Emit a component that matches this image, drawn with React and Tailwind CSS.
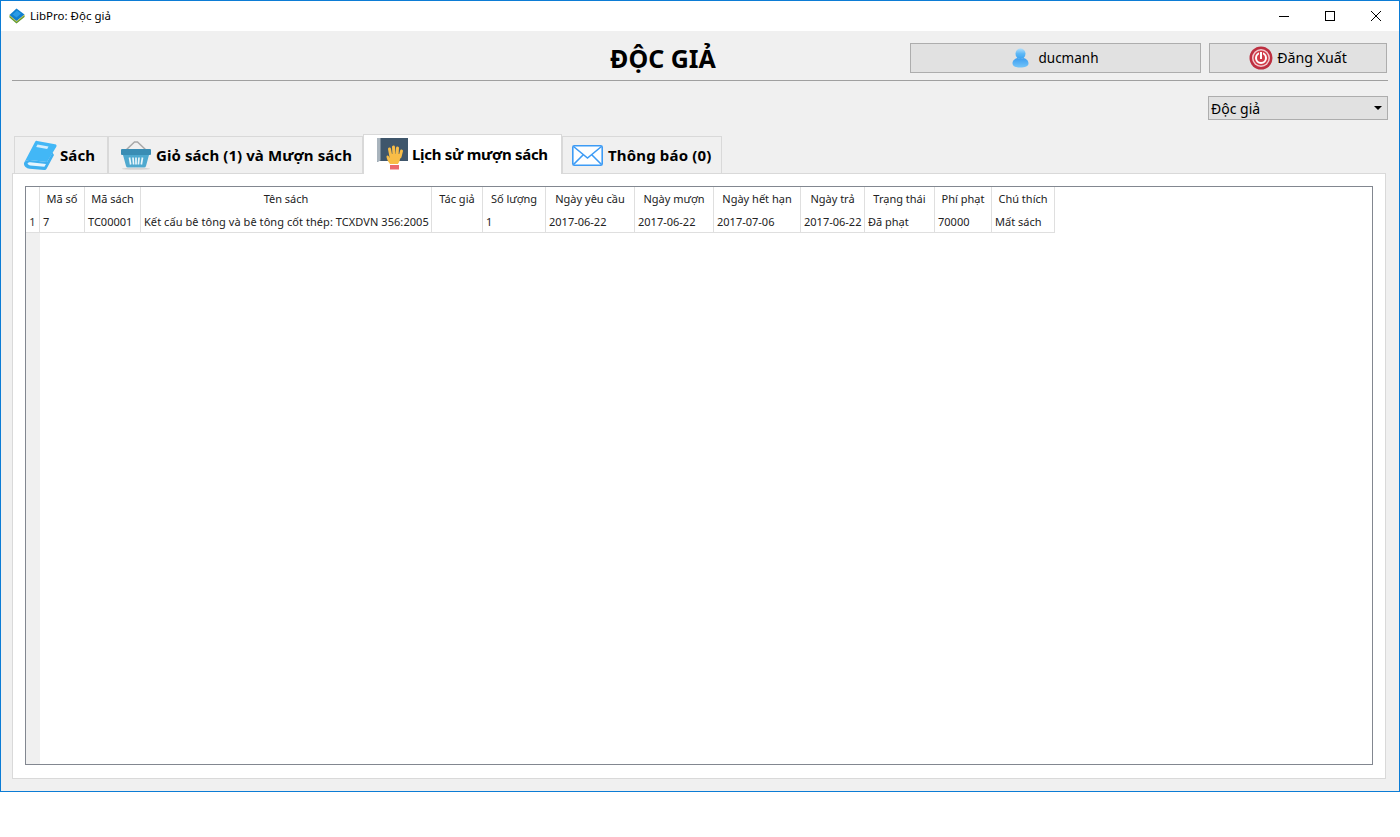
import React from "react";

const columns = [
  { title: "Mã số", value: "7", width: 45 },
  { title: "Mã sách", value: "TC00001", width: 56 },
  { title: "Tên sách", value: "Kết cấu bê tông và bê tông cốt thép: TCXDVN 356:2005", width: 291 },
  { title: "Tác giả", value: "", width: 51 },
  { title: "Số lượng", value: "1", width: 63 },
  { title: "Ngày yêu cầu", value: "2017-06-22", width: 89 },
  { title: "Ngày mượn", value: "2017-06-22", width: 79 },
  { title: "Ngày hết hạn", value: "2017-07-06", width: 87 },
  { title: "Ngày trả", value: "2017-06-22", width: 64 },
  { title: "Trạng thái", value: "Đã phạt", width: 70 },
  { title: "Phí phạt", value: "70000", width: 57 },
  { title: "Chú thích", value: "Mất sách", width: 63 },
];

function AppIcon() {
  return (
    <svg width="16" height="16" viewBox="0 0 16 16">
      <path d="M0.500 8.500l7 6.500 8-6.500v-2l-8 6.500-7-6.500z" fill="#d6c23c" />
      <path d="M0.500 9.500l7 6 8-6.500v-1.500l-8 6.500-7-6z" fill="#5c9a3a" />
      <path d="M0.500 7l7-6.500 8 6-8 6.500z" fill="#0f7fd0" />
      <path d="M3.500 6.500l4.500-4 4 3-4.500 4z" fill="#2a9be6" />
    </svg>
  );
}

function BookIcon() {
  return (
    <svg width="34" height="32" viewBox="0 0 34 32">
      <path d="M1 24L12 3c.500-1 1.200-1.300 2.200-1.100l17.800 3.300c1.500.300 2 1.400 1.300 2.600L24 23 7 21c-2.500-.300-5.500 1-6 3z" fill="#42b7f6" />
      <path d="M1 24c-.500 3 2.500 5.500 5.500 5.800L21 31c1.200.100 2-.300 2.600-1.300L31 16l-1.500-2.500L24 23 7 21c-2.500-.300-5.500 1-6 3z" fill="#3fb0f0" />
      <path d="M4.500 24.300c.500-.800 1.900-1.200 3-1.100l15.500 1.800-1.600 2.800-14-1.300c-1.200-.100-2.500-.900-2.900-2.200z" fill="#e6f5fe" />
      <path d="M14.500 5.500l11 2-1.300 2.500-11-2z" fill="#d3eefd" />
    </svg>
  );
}

function BasketIcon() {
  return (
    <svg width="32" height="30" viewBox="0 0 32 30">
      <path d="M6 10L14.500 2h3L26 10" fill="none" stroke="#a8a8a8" strokeWidth="1.500" />
      <path d="M2 9h28a1 1 0 0 1 1 1v4a1 1 0 0 1-1 1H2a1 1 0 0 1-1-1v-4a1 1 0 0 1 1-1z" fill="#3a8db4" />
      <path d="M3 15h26l-3 11a2 2 0 0 1-2 1.500H8A2 2 0 0 1 6 26z" fill="#4fa9cf" />
      <path d="M9.500 17.500l1.200 7M13 17.500l.600 7M16 17.500v7M19 17.500l-.600 7M22.500 17.500l-1.200 7" stroke="#e9f6fb" strokeWidth="1.700" />
      <ellipse cx="16" cy="28.700" rx="14" ry="1" fill="#d2d2d2" />
    </svg>
  );
}

function HandBookIcon() {
  return (
    <svg width="33" height="36" viewBox="0 0 33 36">
      <path d="M1 1h31v23H5c-2 0-4 .500-4 1z" fill="#3f566b" />
      <path d="M1 1h3.500v22.500L1 25z" fill="#a9b4bd" />
      <path d="M15 20l-1.500-8M18 19l-.500-9M21 19l.500-8M24 20l1.500-6" stroke="#f8bd47" strokeWidth="3" strokeLinecap="round" />
      <path d="M14 27c-1.500-2-3-4-3.500-7-.200-1.500 1.200-2 2-1l1.500 2V17h11l-1 5c-.300 2-1 3.500-2 5z" fill="#f8bd47" />
      <path d="M14 28h9v4.500h-9z" fill="#ec6a6e" />
    </svg>
  );
}

function MailIcon() {
  return (
    <svg width="31" height="21" viewBox="0 0 31 21" fill="none" stroke="#3d9bf5" strokeWidth="1.600">
      <rect x="0.800" y="0.800" width="29.400" height="19.400" rx="1.500" fill="#fdfeff" />
      <path d="M1.500 1.500l14 11.500 14-11.500M1.500 19.500l10-10M29.500 19.500l-10-10" />
    </svg>
  );
}

function UserIcon() {
  return (
    <svg width="17" height="20" viewBox="0 0 17 20">
      <defs>
        <linearGradient id="userHead" x1="0" y1="0" x2="0" y2="1">
          <stop offset="0" stopColor="#b5e0fb" />
          <stop offset="0.500" stopColor="#5db8f6" />
          <stop offset="1" stopColor="#3ba2f0" />
        </linearGradient>
        <linearGradient id="userBody" x1="0" y1="0" x2="0" y2="1">
          <stop offset="0" stopColor="#3b9df0" />
          <stop offset="1" stopColor="#74c5f9" />
        </linearGradient>
      </defs>
      <path d="M0.500 15.500c0-3.500 3-5 5-5.500 2 1.300 4 1.300 6 0 2 .500 5 2 5 5.500 0 2.800-3.500 4-8 4s-8-1.200-8-4z" fill="url(#userBody)" />
      <ellipse cx="8.500" cy="5.700" rx="5" ry="5.400" fill="url(#userHead)" />
    </svg>
  );
}

function PowerIcon() {
  return (
    <svg width="24" height="24" viewBox="0 0 24 24">
      <circle cx="12" cy="12" r="11.500" fill="#bd2f40" />
      <circle cx="12" cy="12" r="9" fill="#f2c9ce" />
      <circle cx="12" cy="12" r="7.500" fill="#d23c48" />
      <circle cx="12" cy="12" r="5" fill="none" stroke="#fff" strokeWidth="2" />
      <rect x="10" y="5" width="4" height="8" fill="#d23c48" />
      <rect x="11" y="6" width="2" height="7" fill="#fff" />
    </svg>
  );
}

function Tab({ icon, label, active, width, padding, gap, tracking }) {
  return (
    <div
      className={
        active
          ? `relative z-10 -mb-px flex h-[40px] items-center border border-b-0 border-[#d9d9d9] bg-white ${padding} ${gap}`
          : `flex h-[37px] items-center border border-b-0 border-[#d9d9d9] bg-[#f0f0f0] ${padding} ${gap}`
      }
      style={{ width }}
    >
      {icon}
      <span className={`text-[15px] font-bold whitespace-nowrap text-black ${tracking}`}>{label}</span>
    </div>
  );
}

export default function App() {
  return (
    <div className="h-[792px] w-[1400px] border border-[#0c7cd5] bg-[#f0f0f0] font-['Noto_Sans','Open_Sans',sans-serif] text-black">
      {/* Title bar */}
      <div className="flex h-[30px] items-center bg-white pl-[8px]">
        <AppIcon />
        <span className="ml-[5px] text-[11.5px]">LibPro: Độc giả</span>
        <div className="ml-auto flex h-full">
          <div className="flex w-[46px] items-center justify-center">
            <div className="h-px w-[10px] bg-black" />
          </div>
          <div className="flex w-[46px] items-center justify-center">
            <div className="h-[10px] w-[10px] border border-black" />
          </div>
          <div className="flex w-[46px] items-center justify-center">
            <svg width="10" height="10" viewBox="0 0 10 10" stroke="#000" strokeWidth="1">
              <path d="M0 0l10 10M10 0L0 10" />
            </svg>
          </div>
        </div>
      </div>

      {/* Header */}
      <div className="mx-[11px] flex h-[50px] items-start border-b border-[#a0a0a0] pt-[12px]">
        <div className="flex h-[30px] flex-1 items-center justify-center pl-[404px]">
          <h1 className="text-[25px] leading-none font-bold">ĐỘC GIẢ</h1>
        </div>
        <div className="mr-[8px] flex h-[30px] w-[291px] shrink-0 items-center justify-center gap-[9px] border border-[#adadad] bg-[#e1e1e1] text-[13.5px]">
          <UserIcon />
          <span className="pt-px">ducmanh</span>
        </div>
        <div className="mr-px flex h-[30px] w-[178px] shrink-0 items-center justify-center gap-[4px] border border-[#adadad] bg-[#e1e1e1] text-[14.2px]">
          <PowerIcon />
          <span>Đăng Xuất</span>
        </div>
      </div>

      {/* Role select */}
      <div className="mr-[11px] mt-[15px] flex justify-end">
        <div className="flex h-[24px] w-[180px] items-center justify-between border border-[#adadad] bg-[#e1e1e1] pl-[2px] pr-[5px] text-[14px]">
          <span>Độc giả</span>
          <svg width="8" height="4" viewBox="0 0 8 4">
            <path d="M0 0h8L4 4z" fill="#000" />
          </svg>
        </div>
      </div>

      {/* Tabs */}
      <div className="ml-[13px] mt-[14px] flex items-end">
        <Tab icon={<BookIcon />} label="Sách" width={94} padding="pl-[8px]" gap="gap-[3px]" tracking="tracking-[0.1px]" />
        <Tab icon={<BasketIcon />} label="Giỏ sách (1) và Mượn sách" width={255} padding="pl-[11px]" gap="gap-[4px]" tracking="tracking-[0.08px]" />
        <Tab icon={<HandBookIcon />} label="Lịch sử mượn sách" width={199} padding="pl-[12px]" gap="gap-[3px]" tracking="tracking-[-0.3px]" active />
        <Tab icon={<MailIcon />} label="Thông báo (0)" width={160} padding="pl-[9px]" gap="gap-[5px]" tracking="tracking-[0.16px]" />
      </div>

      {/* Tab pane */}
      <div className="ml-[11px] mr-[13px] h-[606px] border border-[#d9d9d9] bg-white pl-[12px] pr-[12px] pt-[12px]">
        <div className="flex h-[579px] border border-[#828790] bg-white">
          <div className="flex w-[14px] shrink-0 flex-col bg-[#f0f0f0]">
            <div className="h-[23px] border-r border-[#dfdfdf] bg-white" />
            <div className="flex h-[23px] items-center justify-center border-r border-b border-[#dfdfdf] bg-white pt-[2px] text-[11px] text-[#333]">1</div>
          </div>
          <table className="h-fit w-[1015px] table-fixed border-separate border-spacing-0 text-[11px] text-[#222]">
            <colgroup>
              {columns.map((c) => (
                <col key={c.title} style={{ width: c.width }} />
              ))}
            </colgroup>
            <thead>
              <tr className="h-[23px]">
                {columns.map((c) => (
                  <th key={c.title} className="border-r border-[#dfdfdf] p-0 pt-px text-center font-normal whitespace-nowrap">
                    {c.title}
                  </th>
                ))}
              </tr>
            </thead>
            <tbody>
              <tr className="h-[23px]">
                {columns.map((c) => (
                  <td key={c.title} className="border-r border-b border-[#dfdfdf] px-[3px] pt-[2px] pb-0 whitespace-nowrap">
                    {c.title === "Tên sách" ? <span className="tracking-[0.06px]">{c.value}</span> : c.value}
                  </td>
                ))}
              </tr>
            </tbody>
          </table>
        </div>
      </div>
    </div>
  );
}
